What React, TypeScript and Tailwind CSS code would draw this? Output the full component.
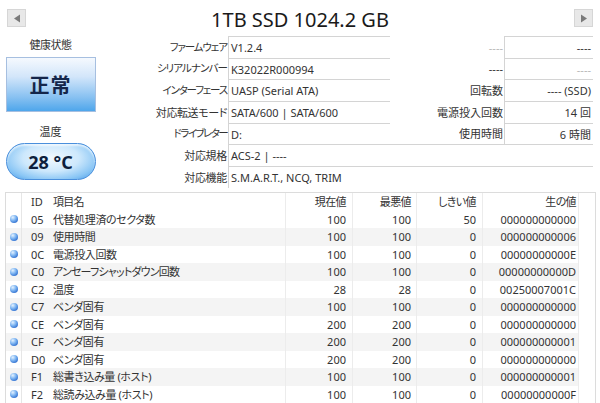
import React from "react";

const rows: string[][] = [
  ["05", "代替処理済のセクタ数", "100", "100", "50", "000000000000"],
  ["09", "使用時間", "100", "100", "0", "000000000006"],
  ["0C", "電源投入回数", "100", "100", "0", "00000000000E"],
  ["C0", "アンセーフシャットダウン回数", "100", "100", "0", "00000000000D"],
  ["C2", "温度", "28", "28", "0", "00250007001C"],
  ["C7", "ベンダ固有", "100", "100", "0", "000000000000"],
  ["CE", "ベンダ固有", "200", "200", "0", "000000000000"],
  ["CF", "ベンダ固有", "200", "200", "0", "000000000001"],
  ["D0", "ベンダ固有", "200", "200", "0", "000000000000"],
  ["F1", "総書き込み量 (ホスト)", "100", "100", "0", "000000000001"],
  ["F2", "総読み込み量 (ホスト)", "100", "100", "0", "00000000000F"],
];

function ArrowBtn({ dir }: { dir: "l" | "r" }) {
  return (
    <div className="w-[19px] h-[18px] bg-[#e8e8e8] border border-[#d6d6d6] flex items-center justify-center">
      <svg width="8" height="9" viewBox="0 0 8 9">
        {dir === "l" ? (
          <polygon points="7,0.5 7,8.5 1,4.5" fill="#7a7a7a" />
        ) : (
          <polygon points="1,0.5 1,8.5 7,4.5" fill="#7a7a7a" />
        )}
      </svg>
    </div>
  );
}

function InfoRow({
  label,
  labelCls,
  value,
  rLabel,
  rValue,
  rLabelGray,
  rValueGray,
  full,
}: {
  label: string;
  labelCls: string;
  value: string;
  rLabel?: string;
  rValue?: string;
  rLabelGray?: boolean;
  rValueGray?: boolean;
  full?: boolean;
}) {
  return (
    <div className="flex h-full">
      <div className={`w-[128px] flex items-center justify-end pr-[1px] text-[#333] whitespace-nowrap ${labelCls}`}>
        {label}
      </div>
      {full ? (
        <div className="w-[365px] border-t border-l border-[#d4d4d4] flex items-center pl-[2px] text-[#333]">
          {value}
        </div>
      ) : (
        <>
          <div className="w-[162px] border-t border-l border-[#d4d4d4] flex items-center pl-[2px] text-[#333]">
            {value}
          </div>
          <div
            className={`w-[114px] flex items-center justify-end pr-[1px] whitespace-nowrap ${
              rLabelGray ? "text-[#b8b8b8]" : "text-[#333]"
            }`}
          >
            {rLabel}
          </div>
          <div
            className={`w-[89px] border-t border-l border-[#d4d4d4] flex items-center justify-end pr-[2px] ${
              rValueGray ? "text-[#b8b8b8]" : "text-[#333]"
            }`}
          >
            {rValue}
          </div>
        </>
      )}
    </div>
  );
}

export default function App() {
  return (
    <div className="w-[600px] h-[403px] bg-white overflow-hidden font-['Noto_Sans','Noto_Sans_CJK_JP',sans-serif] [font-feature-settings:'palt'] text-[11px] leading-none">
      {/* Header */}
      <div className="h-[36px] flex items-start justify-between px-[7px] pt-[9px]">
        <ArrowBtn dir="l" />
        <div className="text-[20px] text-[#1a1a1a] leading-none mt-[1px]">1TB SSD 1024.2 GB</div>
        <ArrowBtn dir="r" />
      </div>

      {/* Info section */}
      <div className="flex h-[156px]">
        <div className="w-[100px] flex flex-col items-center pl-[1px]">
          <div className="h-[16px] flex items-center text-[#333] tracking-[-0.5px]">健康状態</div>
          <div className="mt-[5px] w-[90px] h-[55px] border border-[#a6bfe0] bg-[linear-gradient(to_bottom,#f5f9fe_0%,#d3e6fa_35%,#86c0f1_75%,#4ea6eb_100%)] flex items-center justify-center">
            <span className="text-[20px] font-bold text-[#14264a] font-['Noto_Sans_CJK_JP',sans-serif] tracking-[1px]">正常</span>
          </div>
          <div className="mt-[11px] h-[16px] flex items-center text-[#333]">温度</div>
          <div className="mt-[4px] w-[90px] h-[37px] rounded-full border border-[#4a8fdc] bg-[radial-gradient(ellipse_at_50%_40%,#f2f9ff_0%,#cde8fc_45%,#8ac6f5_75%,#4499e6_100%)] flex items-center justify-center shadow-[inset_0_2px_2px_rgba(255,255,255,0.7)]">
            <span className="text-[18px] font-bold text-[#0e1f3d]">28 °C</span>
          </div>
        </div>
        <div className="grid grid-rows-[22px_21px_22px_22px_21px_22px_22px] h-[152px]">
          <InfoRow label="ファームウェア" labelCls="text-[10.5px] tracking-[-1.1px]" value="V1.2.4" rLabel="----" rValue="----" rLabelGray />
          <InfoRow label="シリアルナンバー" labelCls="text-[10.5px] tracking-[-0.9px]" value="K32022R000994" rLabel="----" rValue="----" rValueGray />
          <InfoRow label="インターフェース" labelCls="text-[10.5px] tracking-[-1.2px]" value="UASP (Serial ATA)" rLabel="回転数" rValue="---- (SSD)" />
          <InfoRow label="対応転送モード" labelCls="tracking-[-0.4px]" value="SATA/600 | SATA/600" rLabel="電源投入回数" rValue="14 回" />
          <InfoRow label="ドライブレター" labelCls="text-[10.5px] tracking-[-1.6px]" value="D:" rLabel="使用時間" rValue="6 時間" />
          <InfoRow label="対応規格" labelCls="tracking-[-0.3px]" value="ACS-2 | ----" full />
          <InfoRow label="対応機能" labelCls="tracking-[-0.3px]" value="S.M.A.R.T., NCQ, TRIM" full />
        </div>
      </div>

      {/* SMART table */}
      <div className="ml-[5px] w-[591px] border-t border-l border-r border-[#dcdcdc] text-[#333]">
        <div className="grid grid-cols-[16px_27px_236px_67px_64px_66px_96px_1fr] h-[17.5px]">
          <div className="border-r border-[#e6e6e6]" />
          <div className="flex items-center pl-[9px]">ID</div>
          <div className="flex items-center pl-[4px] tracking-[-0.8px]">項目名</div>
          <div className="flex items-center justify-end pr-[6px] border-l border-[#ececec] tracking-[-0.6px]">現在値</div>
          <div className="flex items-center justify-end pr-[5px] border-l border-[#ececec] tracking-[-0.6px]">最悪値</div>
          <div className="flex items-center justify-end pr-[6px] border-l border-[#ececec] tracking-[-0.6px]">しきい値</div>
          <div className="flex items-center justify-end pr-[2px] border-l border-[#ececec] tracking-[-0.6px]">生の値</div>
          <div className="border-l border-[#ececec]" />
        </div>
        {rows.map((r, i) => {
          const bg = i % 2 === 1 ? "bg-[#f4f4f4]" : "bg-white";
          const tr = r[0] === "C0" ? "tracking-[-0.8px]" : "tracking-[-0.4px]";
          return (
            <div key={r[0]} className="grid grid-cols-[16px_27px_236px_67px_64px_66px_96px_1fr] h-[17.5px]">
              <div className={`border-r border-[#e6e6e6] flex items-center justify-center ${bg}`}>
                <div className="w-[8px] h-[8px] rounded-full bg-[radial-gradient(circle_at_35%_30%,#e4f2ff_0%,#7fb6f2_40%,#2f6fd0_80%,#2459b0_100%)]" />
              </div>
              <div className={`flex items-center pl-[9px] ${bg}`}>{r[0]}</div>
              <div className={`flex items-center pl-[4px] whitespace-nowrap ${tr} ${bg}`}>{r[1]}</div>
              <div className={`flex items-center justify-end pr-[6px] border-l border-[#ececec] ${bg}`}>{r[2]}</div>
              <div className={`flex items-center justify-end pr-[5px] border-l border-[#ececec] ${bg}`}>{r[3]}</div>
              <div className={`flex items-center justify-end pr-[6px] border-l border-[#ececec] ${bg}`}>{r[4]}</div>
              <div className={`flex items-center justify-end pr-[2px] border-l border-[#ececec] ${bg}`}>{r[5]}</div>
              <div className="border-l border-[#ececec]" />
            </div>
          );
        })}
      </div>
    </div>
  );
}
